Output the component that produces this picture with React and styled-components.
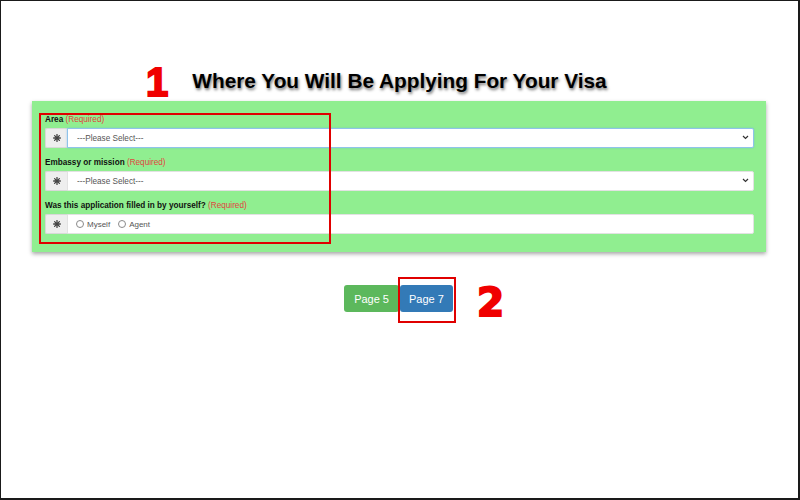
import styled, { createGlobalStyle } from "styled-components";

const GlobalStyle = createGlobalStyle`
  html, body {
    margin: 0;
    padding: 0;
    background: #fff;
  }
  body {
    font-family: "Liberation Sans", Arial, sans-serif;
  }
`;

const Frame = styled.div`
  position: relative;
  width: 800px;
  height: 500px;
  box-sizing: border-box;
  border: 1px solid #1a1a1a;
  border-right-width: 2px;
  border-bottom-width: 2px;
  background: #fff;
  overflow: hidden;
`;

const Title = styled.h2`
  margin: 68px 0 0;
  font-size: 20.8px;
  line-height: 24px;
  font-weight: bold;
  text-align: center;
  color: #000;
  text-shadow: 1px 2px 3px rgba(0, 0, 0, 0.55);
`;

const Panel = styled.div`
  margin: 8px 0 0 31px;
  width: 734px;
  box-sizing: border-box;
  padding: 13px 12px 9px 13px;
  background: #90ee90;
  box-shadow: 0 2px 4px rgba(0, 0, 0, 0.35);
`;

const Group = styled.div`
  margin-bottom: 9px;
`;

const Label = styled.div`
  font-size: 8.2px;
  line-height: 11px;
  font-weight: bold;
  color: #111;
  margin-bottom: 3px;
  white-space: nowrap;
`;

const Required = styled.span`
  font-weight: normal;
  color: #e0453f;
`;

const InputGroup = styled.div`
  display: flex;
  height: 20px;
`;

const Addon = styled.div`
  width: 22px;
  flex: none;
  display: flex;
  align-items: center;
  justify-content: center;
  background: #eee;
  border: 1px solid #d8d8d8;
  border-right: none;
  box-sizing: border-box;
  border-radius: 2px 0 0 2px;
`;

const SelectWrap = styled.div`
  position: relative;
  flex: 1;
  display: flex;
`;

const Select = styled.select`
  appearance: none;
  flex: 1;
  height: 20px;
  margin: 0;
  padding: 0 0 0 9px;
  font-family: "Liberation Sans", Arial, sans-serif;
  font-size: 8.2px;
  color: #555;
  background: #fff;
  border: 1px solid ${(p) => (p.$focused ? "#8fc3ea" : "#e2e2e2")};
  box-shadow: ${(p) => (p.$focused ? "0 0 2px rgba(102,175,233,0.6)" : "none")};
  border-radius: 0 2px 2px 0;
  outline: none;
`;

const Chevron = styled.svg`
  position: absolute;
  right: 5px;
  top: 7px;
  pointer-events: none;
`;

const RadioBox = styled.div`
  flex: 1;
  display: flex;
  align-items: center;
  gap: 3px;
  padding-left: 8px;
  background: #fff;
  border: 1px solid #e2e2e2;
  border-radius: 0 2px 2px 0;
  font-size: 8px;
  color: #555;
`;

const RadioCircle = styled.span`
  width: 6px;
  height: 6px;
  border: 1px solid #8a8a8a;
  border-radius: 50%;
  background: #fff;
`;

const RadioLabel = styled.span`
  margin-right: 5px;
`;

const Buttons = styled.div`
  display: flex;
  justify-content: center;
  gap: 1px;
  margin-top: 33px;
  padding-right: 2px;
`;

const PageButton = styled.button`
  height: 27px;
  padding: 0 ${(p) => p.$pad}px;
  border: none;
  border-radius: 3px;
  font-family: "Liberation Sans", Arial, sans-serif;
  font-size: 11px;
  color: #fff;
  background: ${(p) => p.$bg};
`;

const Marker = styled.div`
  position: absolute;
  left: ${(p) => p.$x}px;
  top: ${(p) => p.$y}px;
  font-family: ${(p) => p.$font}, sans-serif;
  font-weight: bold;
  font-size: ${(p) => p.$size}px;
  line-height: 1;
  color: #f00000;
  -webkit-text-stroke: ${(p) => p.$stroke}px #f00000;
`;

const Highlight = styled.div`
  position: absolute;
  left: ${(p) => p.$x}px;
  top: ${(p) => p.$y}px;
  width: ${(p) => p.$w}px;
  height: ${(p) => p.$h}px;
  box-sizing: border-box;
  border: 2px solid #e00000;
`;

function Asterisk() {
  return (
    <svg width="8" height="8" viewBox="0 0 8 8">
      <g stroke="#444" strokeWidth="1.3" strokeLinecap="round">
        <line x1="4" y1="0.6" x2="4" y2="7.4" />
        <line x1="0.6" y1="4" x2="7.4" y2="4" />
        <line x1="1.6" y1="1.6" x2="6.4" y2="6.4" />
        <line x1="6.4" y1="1.6" x2="1.6" y2="6.4" />
      </g>
      <circle cx="4" cy="4" r="1.6" fill="#444" />
    </svg>
  );
}

function SelectField({ label, focused }) {
  return (
    <Group>
      <Label>
        {label} <Required>(Required)</Required>
      </Label>
      <InputGroup>
        <Addon>
          <Asterisk />
        </Addon>
        <SelectWrap>
          <Select $focused={focused} defaultValue="">
            <option value="">---Please Select---</option>
          </Select>
          <Chevron width="7" height="5" viewBox="0 0 7 5">
            <path d="M1 1 L3.5 3.5 L6 1" fill="none" stroke="#333" strokeWidth="1.2" />
          </Chevron>
        </SelectWrap>
      </InputGroup>
    </Group>
  );
}

export default function App() {
  return (
    <Frame>
      <GlobalStyle />
      <Title>Where You Will Be Applying For Your Visa</Title>
      <Panel>
        <SelectField label="Area" focused />
        <SelectField label="Embassy or mission" />
        <Group>
          <Label>
            Was this application filled in by yourself? <Required>(Required)</Required>
          </Label>
          <InputGroup>
            <Addon>
              <Asterisk />
            </Addon>
            <RadioBox>
              <RadioCircle />
              <RadioLabel>Myself</RadioLabel>
              <RadioCircle />
              <RadioLabel>Agent</RadioLabel>
            </RadioBox>
          </InputGroup>
        </Group>
      </Panel>
      <Buttons>
        <PageButton $bg="#5cb85c" $pad={10}>Page 5</PageButton>
        <PageButton $bg="#337ab7" $pad={9}>Page 7</PageButton>
      </Buttons>
      <Marker $x={145} $y={61} $size={40} $font='"Liberation Sans"' $stroke={2}>1</Marker>
      <Marker $x={476} $y={282} $size={39} $font='"DejaVu Sans"' $stroke={2}>2</Marker>
      <Highlight $x={38} $y={112} $w={292} $h={131} />
      <Highlight $x={397} $y={276} $w={58} $h={46} />
    </Frame>
  );
}
